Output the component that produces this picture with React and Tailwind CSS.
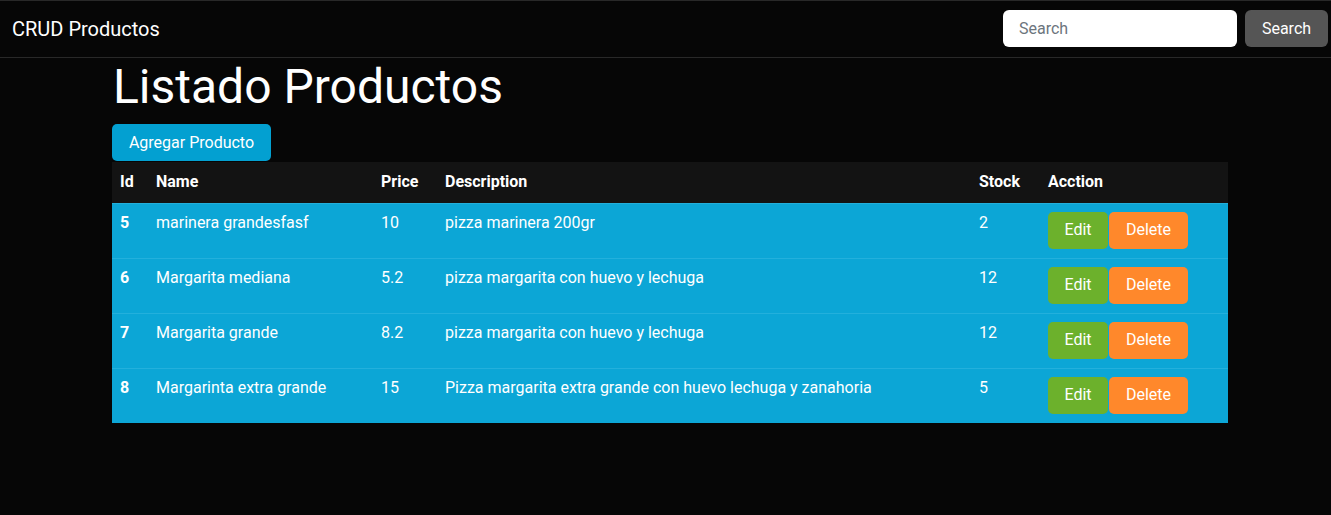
const products = [
  { id: 5, name: 'marinera grandesfasf', price: '10', description: 'pizza marinera 200gr', stock: 2 },
  { id: 6, name: 'Margarita mediana', price: '5.2', description: 'pizza margarita con huevo y lechuga', stock: 12 },
  { id: 7, name: 'Margarita grande', price: '8.2', description: 'pizza margarita con huevo y lechuga', stock: 12 },
  { id: 8, name: 'Margarinta extra grande', price: '15', description: 'Pizza margarita extra grande con huevo lechuga y zanahoria', stock: 5 },
];

export default function App() {
  return (
    <div className="min-h-[515px] bg-[#060606] text-white" style={{ fontFamily: 'Roboto, "Liberation Sans", sans-serif' }}>
      {/* Navbar */}
      <nav className="flex h-[58px] items-start justify-between border-t border-b border-[#282828] bg-[#060606] pt-[9px] pl-3 pr-[3px]">
        <span className="mt-[9px] text-[20px] leading-none">CRUD Productos</span>
        <div className="flex gap-2">
          <input
            type="text"
            placeholder="Search"
            className="block h-[37px] w-[234px] rounded-md bg-white px-4 text-[16px] text-[#212529] placeholder-[#6c757d] outline-none"
          />
          <button type="button" className="block h-[37px] w-[83px] rounded-md bg-[#555555] text-[16px] text-white">
            Search
          </button>
        </div>
      </nav>

      {/* Content */}
      <div className="ml-[112px] w-[1116px]">
        <h1 className="ml-[1px] text-[48px] leading-[58px] font-normal">Listado Productos</h1>
        <button type="button" className="mt-[8px] block h-[37px] w-[159px] rounded-[5px] bg-[#03a0d1] text-[16px] text-white">
          Agregar Producto
        </button>

        <table className="mt-[1px] w-full border-collapse text-[16px]">
          <thead>
            <tr className="h-[41px] bg-[#131313] text-left font-bold">
              <th className="w-[36px] px-2">Id</th>
              <th className="w-[225px] px-2">Name</th>
              <th className="w-[64px] px-2">Price</th>
              <th className="w-[534px] px-2">Description</th>
              <th className="w-[69px] px-2">Stock</th>
              <th className="px-2">Acction</th>
            </tr>
          </thead>
          <tbody>
            {products.map((p) => (
              <tr key={p.id} className="h-[55px] border-t border-[#23b0dc] bg-[#0ca6d6] align-top">
                <td className="px-2 pt-[7px] font-bold">{p.id}</td>
                <td className="px-2 pt-[7px]">{p.name}</td>
                <td className="px-2 pt-[7px]">{p.price}</td>
                <td className="px-2 pt-[7px]">{p.description}</td>
                <td className="px-2 pt-[7px]">{p.stock}</td>
                <td className="px-2 pt-[8px] pb-[9px]">
                  <div className="flex gap-[1px]">
                    <button type="button" className="h-[37px] w-[60px] rounded-[5px] bg-[#6cb12c] text-white">Edit</button>
                    <button type="button" className="h-[37px] w-[79px] rounded-[5px] bg-[#ff882b] text-white">Delete</button>
                  </div>
                </td>
              </tr>
            ))}
          </tbody>
        </table>
      </div>
    </div>
  );
}
